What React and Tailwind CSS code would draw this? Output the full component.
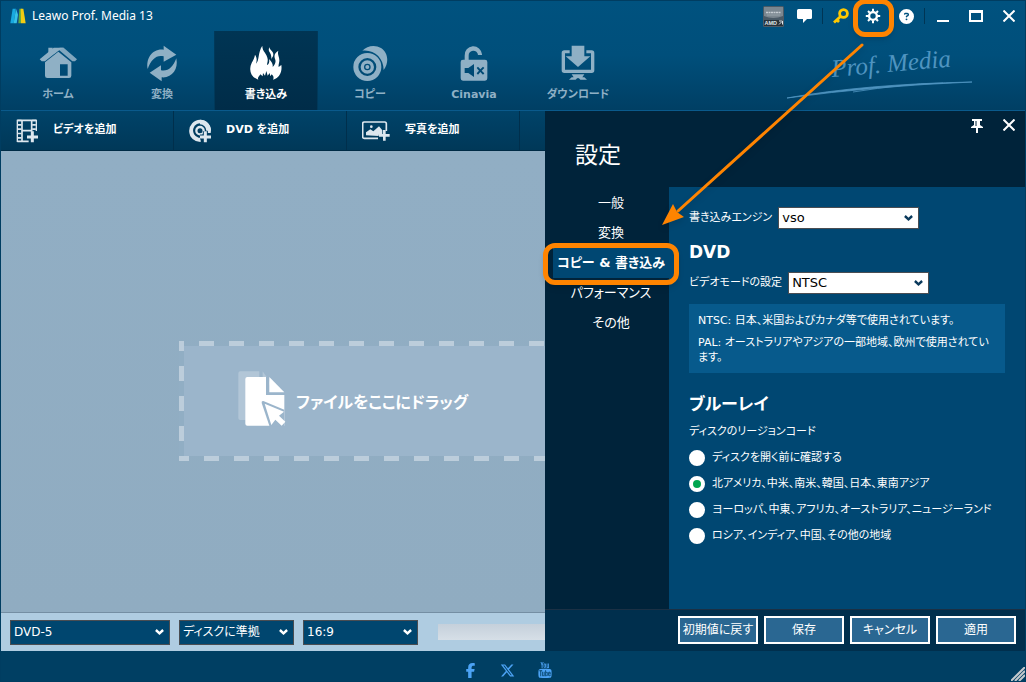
import { useState } from "react";
import { FaFacebookF, FaXTwitter, FaCircleQuestion } from "react-icons/fa6";
import { TfiYoutube } from "react-icons/tfi";

const NAV = [
  { label: "ホーム", icon: HomeIcon },
  { label: "変換", icon: ConvertIcon },
  { label: "書き込み", icon: FlameIcon },
  { label: "コピー", icon: DiscsIcon },
  { label: "Cinavia", icon: LockIcon },
  { label: "ダウンロード", icon: DownloadIcon },
];

const TOOLS = [
  { label: "ビデオを追加", icon: AddVideoIcon },
  { label: "DVD を追加", icon: AddDiscIcon },
  { label: "写真を追加", icon: AddPhotoIcon },
];

const SECTIONS = ["一般", "変換", "コピー & 書き込み", "パフォーマンス", "その他"];

const REGIONS = [
  "ディスクを開く前に確認する",
  "北アメリカ、中米、南米、韓国、日本、東南アジア",
  "ヨーロッパ、中東、アフリカ、オーストラリア、ニュージーランド",
  "ロシア、インディア、中国、その他の地域",
];

function HomeIcon() {
  return (
    <svg width="38" height="38" viewBox="0 0 114 114" fill="currentColor">
      <path d="M28 8h13v16L28 37z" />
      <path d="M74 8 114 43l-6 6h-8L60 15 46 27v-2L62 8z" opacity=".9" />
      <path d="M2 43 44 8h30L58 17 18 49H8z" />
      <path fillRule="evenodd" d="M18 52 58 20 97 52v40q0 7-7 7H25q-7 0-7-7zM63 58v34h23V58z" />
    </svg>
  );
}

function ConvertIcon() {
  return (
    <svg width="38" height="38" viewBox="0 0 114 114" fill="currentColor">
      <path d="M14 72C8 40 28 10 62 14V2l38 27-38 21V34C42 28 24 42 14 72z" />
      <path d="M100 40c7 34-14 60-44 57v12L20 83l34-22v15c22 4 36-10 46-36z" />
    </svg>
  );
}

function FlameIcon() {
  return (
    <svg width="38" height="38" viewBox="0 0 114 114" fill="currentColor">
      <path d="M34 104C16 98 8 84 10 68 12 52 22 44 24 29c6 9 6 17 3 27C38 46 32 22 46 2c-1 16 14 24 16 40 1 8-2 14-2 18 6-2 8-10 6-18 10 10 12 16 11 24 7-6 11-16 7-24-4-12 0-18 10-25-4 13 4 19 3 31-1 8-3 12-2 18l8-6c3 20-5 38-25 44 4-8 0-12-4-16l-4 6-2-10-6 8-4-14-4 14-6-8-1 10-7-6c-2 6-10 8-6 16z" />
      <path d="M67 6c-1 8 17 14 11 28-2 4-4 5-4 10-2-8 0-14-6-22-4-6-3-10-1-16z" />
    </svg>
  );
}

function DiscsIcon() {
  return (
    <svg width="38" height="38" viewBox="0 0 114 114" fill="currentColor">
      <path d="M34 17C48 2 72-2 90 9c20 12 26 42 8 66 0-36-28-62-64-58z" />
      <path
        fillRule="evenodd"
        d="M49 24a42 42 0 1 1 0 84 42 42 0 0 1 0-84zm0 15a27 27 0 1 0 0 54 27 27 0 0 0 0-54zm0 7a20 20 0 1 1 0 40 20 20 0 0 1 0-40zm0 10a10 10 0 1 0 0 20 10 10 0 0 0 0-20z"
      />
      <circle cx="49" cy="66" r="6" />
    </svg>
  );
}

function LockIcon() {
  return (
    <svg width="38" height="38" viewBox="0 0 114 114" fill="currentColor">
      <path d="M29 52V32a26 26 0 0 1 52-4v2H69a14 14 0 0 0-28 2v20z" />
      <path
        fillRule="evenodd"
        d="M24 44h66q7 0 7 7v49q0 7-7 7H24q-7 0-7-7V51q0-7 7-7zm5 25v15h11l17 12V57L40 69zm36 0 7 8-7 8 4 4 7-8 8 8 4-4-8-8 8-8-4-4-8 8-7-8z"
      />
    </svg>
  );
}

function DownloadIcon() {
  return (
    <svg width="38" height="38" viewBox="0 0 114 114" fill="currentColor">
      <path d="M38 2h38v32h18L57 66 20 34h18z" />
      <path d="M32 16v9H18v49h78V25H82v-9h16q8 0 8 8v52q0 8-8 8H16q-8 0-8-8V24q0-8 8-8z" />
      <path d="M38 88h38l-6 9h6l8 7H64q-7-10-14 0H30l8-7h6z" />
    </svg>
  );
}

function AddVideoIcon() {
  return (
    <svg width="22" height="24" viewBox="0 0 66 72" fill="none" stroke="currentColor">
      <path d="M4 4H61M4 67h34M18 4v63M47 4v34M18 35h30" strokeWidth="5" />
      <path d="M4 2v67M61 2v34" strokeWidth="4" />
      <path d="M11 2v67M54 2v32" strokeWidth="11" strokeDasharray="5 8" />
      <path d="M49 37v33M33 54h33" strokeWidth="9" />
    </svg>
  );
}

function AddDiscIcon() {
  return (
    <svg width="22" height="24" viewBox="0 0 66 72">
      <path
        fill="currentColor"
        fillRule="evenodd"
        d="M33 2a33 33 0 0 1 32 40H55a22 22 0 1 0-26 14h6v13A33 33 0 1 1 33 2z"
      />
      <path fill="currentColor" d="M33 2a33 33 0 0 1 33 33H52A19 19 0 0 0 33 16z" />
      <circle cx="33" cy="35" r="11" fill="none" stroke="currentColor" strokeWidth="7" />
      <path d="M49 37v33M33 54h33" stroke="#003f63" strokeWidth="15" />
      <path d="M49 37v33M33 54h33" stroke="currentColor" strokeWidth="9" />
    </svg>
  );
}

function AddPhotoIcon() {
  return (
    <svg width="28" height="20" viewBox="0 0 84 60" fill="none">
      <path d="M48 52H7q-5 0-5-5V8q0-5 5-5h61q5 0 5 5v22" stroke="currentColor" strokeWidth="5" />
      <path fill="currentColor" d="M12 43V34l13-9 9 6 17-15 10 12v13H50v4z" />
      <circle cx="28" cy="17" r="4" fill="currentColor" />
      <path d="M67 27v32M51 43h32" stroke="currentColor" strokeWidth="8" />
    </svg>
  );
}

function LogoIcon() {
  return (
    <svg width="16" height="16" viewBox="0 0 48 48">
      <path d="M8 2h10L11 46H1z" fill="#18a9e0" />
      <path d="M17 2h8l7 44H18z" fill="#0b4d86" />
      <path d="M18 2 11 46h9l4-26z" fill="#36c2e8" />
      <path d="M28 2h8l-3 44h-8z" fill="#5ba845" />
      <path d="M32 2h8l7 44H33z" fill="#f2cb13" />
    </svg>
  );
}

function GearIcon() {
  return (
    <svg width="16" height="16" viewBox="-8 -8 16 16" fill="none" stroke="currentColor">
      <circle r="3.900" strokeWidth="2.400" />
      <path
        strokeWidth="2"
        d="M0-4.500V-7.200M0 4.500V7.200M-4.500 0H-7.200M4.500 0H7.200M3.300-3.300 5-5M-3.300-3.300-5-5M3.300 3.300 5 5M-3.300 3.300-5 5"
      />
    </svg>
  );
}

function KeyIcon() {
  return (
    <svg width="16" height="16" viewBox="0 0 16 16" fill="none" stroke="#ffc800">
      <circle cx="10.500" cy="5.500" r="3.900" strokeWidth="2.800" />
      <path d="M7.500 8.500 1 14.500M3.500 11.500l2.500 2.500" strokeWidth="2.800" />
    </svg>
  );
}

function CloseIcon() {
  return (
    <svg width="12" height="12" viewBox="0 0 12 12" fill="none" stroke="currentColor" strokeWidth="2">
      <path d="M.5.5l11 11M11.500.5l-11 11" />
    </svg>
  );
}

function FilesIcon() {
  return (
    <svg width="48" height="57" viewBox="0 0 144 171">
      <path d="M7 1h57v50h20v96H7q-6 0-6-6V7q0-6 6-6zm67 0 28 40H74z" fill="#b2c6d7" />
      <path d="M28 18h56v54h55v92H28q-6 0-6-6V24q0-6 6-6z" fill="#fff" />
      <path d="M84 18h10v46h46v8H84z" fill="#9bb5cb" />
      <path d="M94 18l45 46H94z" fill="#fff" />
      <path d="M139 116 76 90q-6-1-5 6l24 71h44z" fill="#9bb5cb" />
      <path d="M80 98l58 24-15 12 19 18-11 12-19-18-12 16z" fill="#fff" />
    </svg>
  );
}

function Select({ id, options, light, className }) {
  return (
    <span className={"relative inline-flex " + className}>
      <select
        id={id}
        aria-label={id}
        className={
          "w-full appearance-none border border-[#4a4d52] pr-6 pl-[3px] leading-4 outline-none " +
          (light ? "h-[22px] bg-white text-[13px] text-black" : "h-[25px] bg-[#00466f] text-xs text-white")
        }
      >
        {options.map((o) => (
          <option key={o}>{o}</option>
        ))}
      </select>
      <svg
        className={
          "pointer-events-none absolute top-1/2 right-[6px] -translate-y-1/2 " +
          (light ? "text-[#0b3a5c]" : "text-white")
        }
        width="9"
        height="7"
        viewBox="0 0 9 7"
        fill="none"
        stroke="currentColor"
        strokeWidth="2.400"
      >
        <path d="M.9 1.500l3.600 3.300 3.600-3.300" />
      </svg>
    </span>
  );
}

function TitleBar() {
  return (
    <div className="flex h-[30px] items-center pl-[9px]">
      <LogoIcon />
      <h1 className="ml-[6px] flex-1 font-['Noto_Sans'] text-xs text-white">Leawo Prof. Media 13</h1>
      <div className="flex h-full items-center text-white">
        <svg className="mr-[13px]" width="21" height="21" viewBox="0 0 21 21" aria-label="AMD">
          <rect width="21" height="21" rx="1.500" fill="#4a5a66" />
          <path d="M1 1h19v9Q10 14 1 10z" fill="#7b8790" />
          <path d="M1 14h19v6H1z" fill="#27323b" />
          <path d="M3 6.500h15" stroke="#c5ccd2" strokeWidth="1.500" strokeDasharray="2 .5" />
          <path d="M4 9h13" stroke="#a5afb7" strokeWidth=".7" />
          <text x="1.500" y="19" fontSize="5.500" fontWeight="700" fontFamily="Liberation Sans, sans-serif" fill="#dfe5ea">
            AMD
          </text>
          <path d="M16 15h3.500v3.500M18.500 16l-2.500 2.500" stroke="#dfe5ea" fill="none" />
        </svg>
        <button aria-label="Feedback" className="mr-[10px]">
          <svg width="15" height="14" viewBox="0 0 15 14" fill="currentColor">
            <path d="M1.500 0h12Q15 0 15 1.500v7q0 1.500-1.500 1.500H10l-4 4v-4H1.500Q0 10 0 8.500v-7Q0 0 1.500 0z" />
          </svg>
        </button>
        <span className="mr-[10px] h-4 w-px bg-[#003554]" />
        <button aria-label="Register" className="mr-4">
          <KeyIcon />
        </button>
        <button aria-label="Settings" className="relative mr-[18px]">
          <GearIcon />
          <span className="absolute -top-[9px] -left-3 h-[38px] w-[41px] rounded-xl border-[5px] border-[#ff8400] shadow-md" />
        </button>
        <button aria-label="Help" className="mr-[10px]">
          <FaCircleQuestion size={15} />
        </button>
        <span className="mr-3 h-4 w-px bg-[#003554]" />
        <button aria-label="Minimize" className="mr-5 flex h-3 w-3 items-end">
          <span className="h-[2px] w-full bg-white" />
        </button>
        <button aria-label="Maximize" className="mr-5 h-3 w-[14px] border-2 border-t-[3px] border-white" />
        <button aria-label="Close" className="mr-[10px]">
          <CloseIcon />
        </button>
      </div>
    </div>
  );
}

function Header() {
  return (
    <header className="border-b border-[#0a5a8c] bg-linear-to-b from-[#00527f] via-[#004f7b] to-[#003f64]">
      <TitleBar />
      <div className="flex h-[79px] justify-between pl-[5px]">
        <nav className="flex">
          {NAV.map(({ label, icon: Icon }) => {
            const active = label === "書き込み";
            return (
              <button
                key={label}
                className={
                  "flex w-[104px] flex-col items-center gap-[2px] border-x pt-[14px] text-[11px] leading-5 font-bold " +
                  (active
                    ? "border-[#00395a] bg-linear-to-b from-[#003554] to-[#002c48] text-white"
                    : "border-transparent text-[#8fb0c5]")
                }
              >
                <Icon />
                <span>{label}</span>
              </button>
            );
          })}
        </nav>
        <svg className="mr-[50px]" width="190" height="79" viewBox="0 0 190 79" aria-hidden="true">
          <text
            x="47"
            y="46"
            transform="rotate(-5 47 46)"
            fontFamily="Liberation Serif, serif"
            fontStyle="italic"
            fontSize="25"
            fill="#4f94c0"
          >
            Prof. Media
          </text>
          <path d="M2 67Q80 53 187 51Q90 55 2 67z" fill="#4f94c0" stroke="#4f94c0" strokeWidth=".8" />
          <path d="M68 61q50-8 90-9" fill="none" stroke="#4f94c0" strokeWidth=".8" />
        </svg>
      </div>
    </header>
  );
}

function Workspace() {
  return (
    <section className="flex min-w-0 flex-1 flex-col">
      <div className="flex h-10 border-b border-[#002b45] bg-linear-to-b from-[#004369] to-[#003858]">
        {TOOLS.map(({ label, icon: Icon }) => (
          <button
            key={label}
            className="flex w-[173px] items-center gap-[15px] border-r border-[#002f4c] pl-[15px] text-[11px] font-bold text-white"
          >
            <span className="text-[#dde7ee]">
              <Icon />
            </span>
            {label}
          </button>
        ))}
      </div>
      <div className="flex flex-1 items-center bg-linear-to-b from-[#91aec4] to-[#90acc1] pt-[39px] pl-[178px]">
        <div className="flex h-[120px] flex-1 flex-col">
          <div className="h-[5px] bg-[repeating-linear-gradient(to_right,#bccddb_0_5px,transparent_5px_20px,#bccddb_20px_30px)]" />
          <div className="flex flex-1 bg-[#9bb5cb]">
            <div className="w-[5px] bg-[#91aec4] bg-[repeating-linear-gradient(to_bottom,#bccddb_0_5px,transparent_5px_20px,#bccddb_20px_35px)] bg-[length:5px_30px]" />
            <div className="flex items-center gap-[10px] pl-[54px]">
              <div className="pb-[3px]">
                <FilesIcon />
              </div>
              <p className="pt-[3px] text-base font-bold whitespace-nowrap text-white">ファイルをここにドラッグ</p>
            </div>
          </div>
          <div className="h-[5px] bg-[repeating-linear-gradient(to_right,#bccddb_0_10px,transparent_10px_25px,#bccddb_25px_30px)]" />
        </div>
      </div>
      <div className="flex h-[39px] items-center gap-[9px] border-t border-[#748ea3] bg-[#afcce1] pl-[9px]">
        <Select id="ディスクの種類" options={["DVD-5", "DVD-9"]} className="w-[160px]" />
        <Select id="品質" options={["ディスクに準拠"]} className="w-[115px]" />
        <Select id="縦横比" options={["16:9", "4:3"]} className="w-[115px]" />
        <div className="ml-[11px] h-4 flex-1 bg-linear-to-b from-[#c5d0db] to-[#d6dfe7]" />
      </div>
    </section>
  );
}

function Settings() {
  const [region, setRegion] = useState(1);
  return (
    <aside className="flex w-[480px] shrink-0 flex-col bg-[#00233a] text-white">
      <div className="flex h-[76px] justify-between pl-[30px]">
        <h2 className="pt-[27px] text-[23px] leading-[34px]">設定</h2>
        <div className="mr-[10px] flex gap-5 pt-2">
          <button aria-label="Pin" className="h-3">
            <svg width="12" height="14" viewBox="0 0 12 14" fill="currentColor">
              <path d="M1 0h10v2H9v4l3 2v1H7v5H5V9H0V8l3-2V2H1z" />
              <path d="M5 2v5" stroke="#00233a" />
            </svg>
          </button>
          <button aria-label="Close settings" className="h-3">
            <CloseIcon />
          </button>
        </div>
      </div>
      <div className="flex flex-1">
        <nav className="w-[124px] shrink-0 pt-px pl-2">
          {SECTIONS.map((label, i) => (
            <button
              key={label}
              className={
                "relative flex h-[30px] w-full items-center justify-center text-[13px] whitespace-nowrap " +
                (i === 2 ? "bg-[#004772] font-bold" : "")
              }
            >
              {label}
              {i === 2 && (
                <span className="absolute -inset-x-[10px] -top-[5px] h-[42px] rounded-xl border-[5px] border-[#ff8400] shadow-md" />
              )}
            </button>
          ))}
        </nav>
        <div className="flex-1 bg-[#004772] px-5 pt-5 text-[11px] leading-4">
          <div className="flex items-center gap-[6px]">
            <label htmlFor="書き込みエンジン">書き込みエンジン</label>
            <Select light id="書き込みエンジン" options={["vso"]} className="w-[141px]" />
          </div>
          <h3 className="mt-[11px] text-[17px] leading-6 font-bold">DVD</h3>
          <div className="mt-2 flex items-center gap-[6px]">
            <label htmlFor="ビデオモードの設定">ビデオモードの設定</label>
            <Select light id="ビデオモードの設定" options={["NTSC", "PAL"]} className="w-[141px]" />
          </div>
          <div className="mt-[10px] h-[69px] max-w-[316px] bg-[#075a8c] px-[9px] pt-[9px]">
            <p>NTSC: 日本、米国およびカナダ等で使用されています。</p>
            <p className="mt-[6px] leading-[15px]">PAL: オーストラリアやアジアの一部地域、欧州で使用されています。</p>
          </div>
          <h3 className="mt-[19px] text-[17px] leading-6 font-bold">ブルーレイ</h3>
          <fieldset className="pt-2">
            <legend className="contents">ディスクのリージョンコード</legend>
            <div className="mt-[5px]">
              {REGIONS.map((label, i) => (
                <label key={label} className="flex h-[26px] items-center gap-[7px] whitespace-nowrap">
                  <input
                    type="radio"
                    name="region"
                    checked={region === i}
                    onChange={() => setRegion(i)}
                    className="size-4 appearance-none rounded-full border-4 border-white bg-white checked:bg-[#00a650]"
                  />
                  {label}
                </label>
              ))}
            </div>
          </fieldset>
        </div>
      </div>
      <div className="flex h-[42px] items-center justify-end gap-[6px] border-t border-[#1b3044] bg-[#002f4d] pr-[9px] pb-px">
        {["初期値に戻す", "保存", "キャンセル", "適用"].map((label) => (
          <button
            key={label}
            className="h-7 w-20 border-2 border-white bg-[#2a6792] text-xs whitespace-nowrap"
          >
            {label}
          </button>
        ))}
      </div>
    </aside>
  );
}

function PointerArrow() {
  return (
    <svg
      className="pointer-events-none absolute top-[35px] right-[151px] drop-shadow-md"
      width="220"
      height="200"
      viewBox="0 0 220 200"
      aria-hidden="true"
    >
      <path d="M208 9 24 175" stroke="#ff8400" strokeWidth="3" strokeLinecap="round" />
      <path d="M8 189 19 168 23 176 30 181z" fill="#ff8400" />
    </svg>
  );
}

export default function App() {
  return (
    <div className="relative flex min-h-screen flex-col border border-[#003d61] bg-[#003f63] font-['DejaVu_Sans','Noto_Sans_CJK_JP',sans-serif] [font-feature-settings:'palt']">
      <Header />
      <main className="flex flex-1">
        <Workspace />
        <Settings />
      </main>
      <footer className="flex h-[30px] items-center justify-center">
        <div className="flex flex-1 items-center justify-center gap-[22px] pt-2 pl-1 text-[#4ca3f5]">
          <a href="#facebook" aria-label="Facebook">
            <FaFacebookF size={15} />
          </a>
          <a href="#x" aria-label="X">
            <FaXTwitter size={15} />
          </a>
          <a href="#youtube" aria-label="YouTube">
            <TfiYoutube size={16} />
          </a>
        </div>
        <svg className="self-end" width="14" height="14" viewBox="0 0 14 14" stroke="#c3c9cd" strokeWidth="2">
          <path d="M0 14 14 0M4 14 14 4M8 14l6-6" />
        </svg>
      </footer>
      <PointerArrow />
    </div>
  );
}
